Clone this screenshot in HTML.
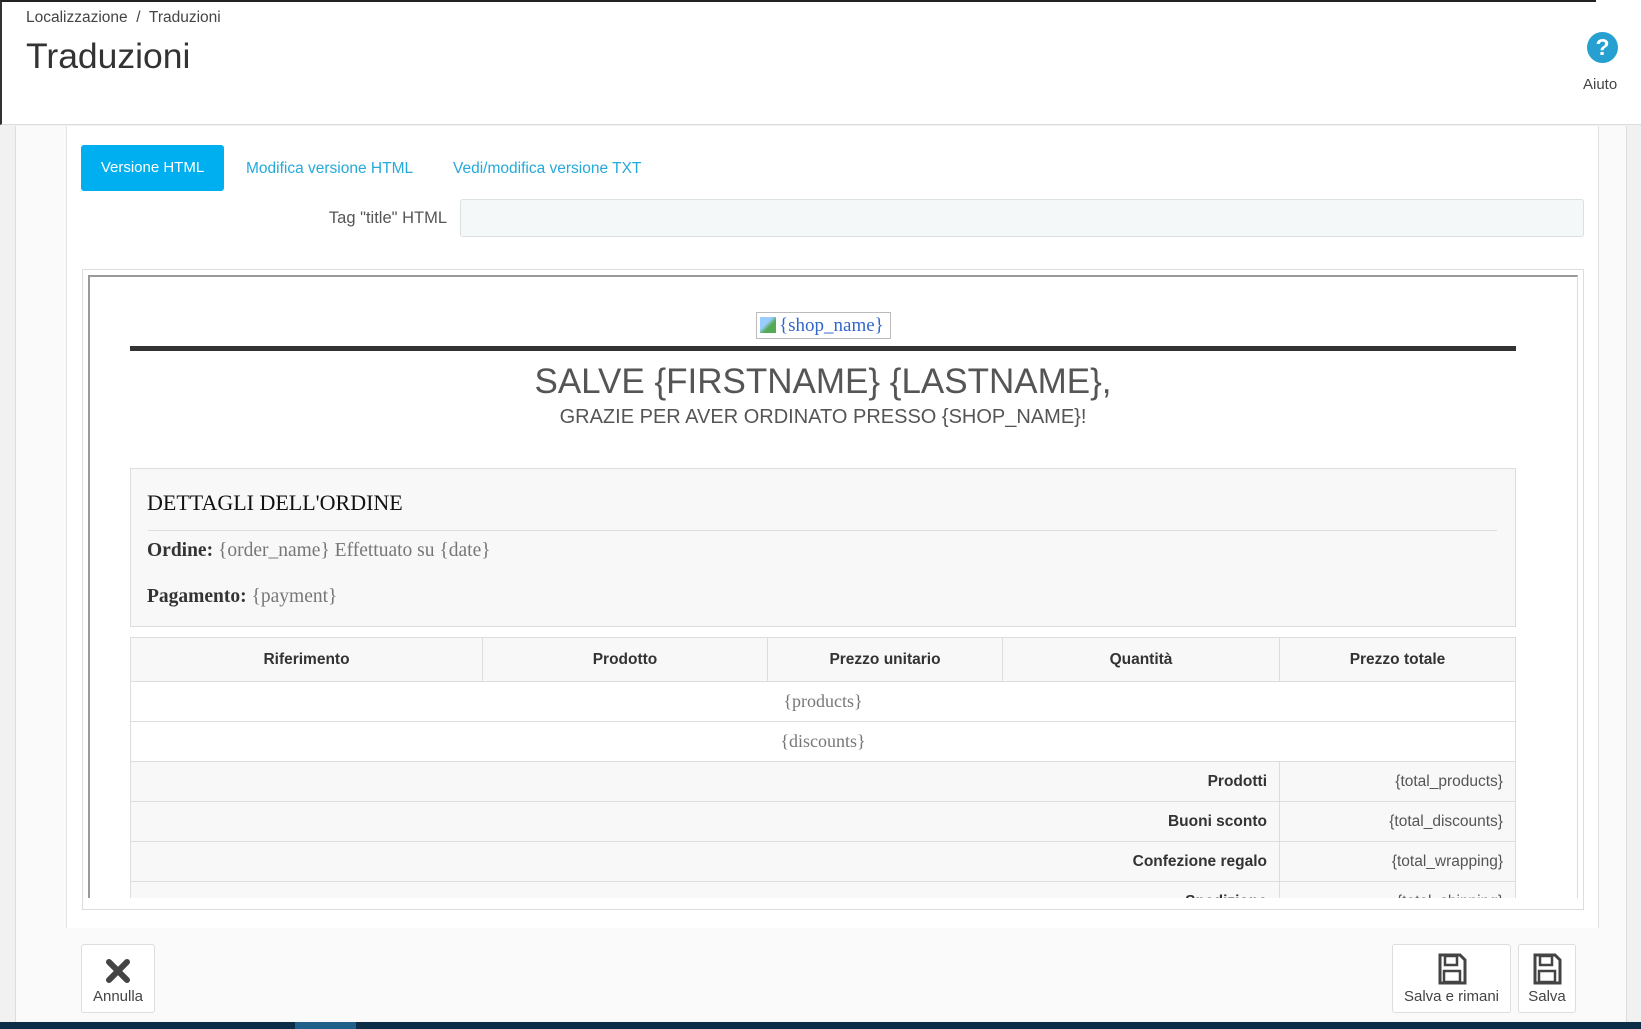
<!DOCTYPE html>
<html><head><meta charset="utf-8"><style>
*{box-sizing:border-box;margin:0;padding:0}
body{width:1641px;height:1029px;position:relative;overflow:hidden;background:#f1f1f1;font-family:"Liberation Sans",sans-serif}
.a{position:absolute}
.ser{font-family:"Liberation Serif",serif}
td,th{border:1px solid #ddd}
</style></head><body>
<div class="a" style="left:0;top:0;width:1596px;height:125px;background:#fff;border-top:2px solid #222;border-left:2px solid #333;border-bottom:1px solid #ddd"></div>
<div class="a" style="left:1596px;top:0;width:45px;height:125px;background:#fff;border-bottom:1px solid #ddd"></div>
<div class="a" style="left:26px;top:9px;font-size:15.5px;color:#444">Localizzazione &nbsp;/&nbsp; Traduzioni</div>
<div class="a" style="left:26px;top:36px;font-size:35.5px;color:#333">Traduzioni</div>
<div class="a" style="left:1587px;top:32px;width:31px;height:31px;border-radius:50%;background:#25a0d0;color:#fff;font-weight:bold;font-size:23px;text-align:center;line-height:31px">?</div>
<div class="a" style="left:1583px;top:76px;font-size:15px;color:#444">Aiuto</div>
<div class="a" style="left:15px;top:126px;width:1612px;height:896px;background:#fafafa;border-left:1px solid #ddd;border-right:1px solid #ddd"></div>
<div class="a" style="left:66px;top:126px;width:1533px;height:802px;background:#fff;border-left:1px solid #e3e3e3;border-right:1px solid #e3e3e3"></div>
<div class="a" style="left:81px;top:145px;width:143px;height:46px;background:#00aff0;border-radius:3px;color:#fff;font-size:15px;text-align:center;line-height:46px">Versione HTML</div>
<div class="a" style="left:246px;top:160px;font-size:15.5px;color:#25a9d9">Modifica versione HTML</div>
<div class="a" style="left:453px;top:160px;font-size:15.5px;color:#25a9d9">Vedi/modifica versione TXT</div>
<div class="a" style="left:250px;top:209px;width:197px;text-align:right;font-size:16.5px;color:#555">Tag "title" HTML</div>
<div class="a" style="left:460px;top:199px;width:1124px;height:38px;background:#f5f8f9;border:1px solid #dbe0e2;border-radius:3px"></div>
<div class="a" style="left:82px;top:269px;width:1502px;height:641px;border:1px solid #ddd;background:#fff"></div>
<div class="a" style="left:88px;top:275px;width:1490px;height:623px;border-top:2px solid #999;border-left:2px solid #999;border-right:1px solid #ddd;overflow:hidden;background:#fff">
  <div class="a ser" style="left:666px;top:35px;width:135px;height:27px;border:1px solid #bbb;font-size:19px;color:#3366cc;line-height:25px;padding-left:22px">{shop_name}<span class="a" style="left:3px;top:4px;width:16px;height:16px;background:linear-gradient(135deg,#9cf 40%,#5a5 60%)"></span></div>
  <div class="a" style="left:40px;top:69px;width:1386px;height:5px;background:#333"></div>
  <div class="a" style="left:0;top:85px;width:1466px;text-align:center;font-size:35px;color:#555">SALVE {FIRSTNAME} {LASTNAME},</div>
  <div class="a" style="left:0;top:129px;width:1466px;text-align:center;font-size:20px;color:#555">GRAZIE PER AVER ORDINATO PRESSO {SHOP_NAME}!</div>
  <div class="a ser" style="left:40px;top:191px;width:1386px;height:159px;background:#f8f8f8;border:1px solid #ddd">
    <div class="a" style="left:16px;top:21px;font-size:22px;color:#111">DETTAGLI DELL'ORDINE</div>
    <div class="a" style="left:17px;top:61px;width:1349px;height:1px;background:#ddd"></div>
    <div class="a" style="left:16px;top:71px;font-size:19.5px;color:#777"><b style="color:#333">Ordine:</b> {order_name} Effettuato su {date}</div>
    <div class="a" style="left:16px;top:117px;font-size:19.5px;color:#777"><b style="color:#333">Pagamento:</b> {payment}</div>
  </div>
  <table class="a" style="left:40px;top:360px;width:1386px;border-collapse:collapse;font-size:15.5px;color:#333">
    <tr style="height:44px;background:#f8f8f8"><th style="width:352px">Riferimento</th><th style="width:285px">Prodotto</th><th style="width:235px">Prezzo unitario</th><th style="width:277px">Quantità</th><th>Prezzo totale</th></tr>
    <tr style="height:40px"><td colspan="5" class="ser" style="text-align:center;color:#777;font-size:18px">{products}</td></tr>
    <tr style="height:40px"><td colspan="5" class="ser" style="text-align:center;color:#777;font-size:18px">{discounts}</td></tr>
    <tr style="height:40px;background:#f8f8f8"><td colspan="4" style="text-align:right;padding-right:12px;font-weight:bold">Prodotti</td><td style="text-align:right;padding-right:12px;color:#555">{total_products}</td></tr>
    <tr style="height:40px;background:#f8f8f8"><td colspan="4" style="text-align:right;padding-right:12px;font-weight:bold">Buoni sconto</td><td style="text-align:right;padding-right:12px;color:#555">{total_discounts}</td></tr>
    <tr style="height:40px;background:#f8f8f8"><td colspan="4" style="text-align:right;padding-right:12px;font-weight:bold">Confezione regalo</td><td style="text-align:right;padding-right:12px;color:#555">{total_wrapping}</td></tr>
    <tr style="height:40px;background:#f8f8f8"><td colspan="4" style="text-align:right;padding-right:12px;font-weight:bold">Spedizione</td><td style="text-align:right;padding-right:12px;color:#555">{total_shipping}</td></tr>
  </table>
</div>
<div class="a" style="left:81px;top:944px;width:74px;height:69px;background:#fff;border:1px solid #ddd;border-radius:3px;text-align:center;font-size:15px;color:#444">
  <svg width="26" height="26" viewBox="0 0 26 26" style="margin-top:13px"><path d="M4 4L22 22M22 4L4 22" stroke="#444" stroke-width="6" stroke-linecap="round"/></svg>
  <div style="margin-top:0px">Annulla</div></div>
<div class="a" style="left:1392px;top:944px;width:119px;height:69px;background:#fff;border:1px solid #ddd;border-radius:3px;text-align:center;font-size:15px;color:#444">
  <svg width="30" height="32" viewBox="0 0 30 32" style="margin-top:8px"><path d="M3 2H23L28 7V30H3Z" fill="none" stroke="#444" stroke-width="3"/><rect x="8" y="3" width="12" height="9" fill="none" stroke="#444" stroke-width="2.5"/><rect x="7" y="18" width="16" height="11" fill="none" stroke="#444" stroke-width="2.5"/></svg>
  <div style="margin-top:-1px;white-space:nowrap">Salva e rimani</div></div>
<div class="a" style="left:1518px;top:944px;width:58px;height:69px;background:#fff;border:1px solid #ddd;border-radius:3px;text-align:center;font-size:15px;color:#444">
  <svg width="30" height="32" viewBox="0 0 30 32" style="margin-top:8px"><path d="M3 2H23L28 7V30H3Z" fill="none" stroke="#444" stroke-width="3"/><rect x="8" y="3" width="12" height="9" fill="none" stroke="#444" stroke-width="2.5"/><rect x="7" y="18" width="16" height="11" fill="none" stroke="#444" stroke-width="2.5"/></svg>
  <div style="margin-top:-1px">Salva</div></div>
<div class="a" style="left:0;top:1022px;width:1641px;height:7px;background:#0d2c46"></div>
<div class="a" style="left:295px;top:1022px;width:61px;height:7px;background:#1f5f8a"></div>
</body></html>
